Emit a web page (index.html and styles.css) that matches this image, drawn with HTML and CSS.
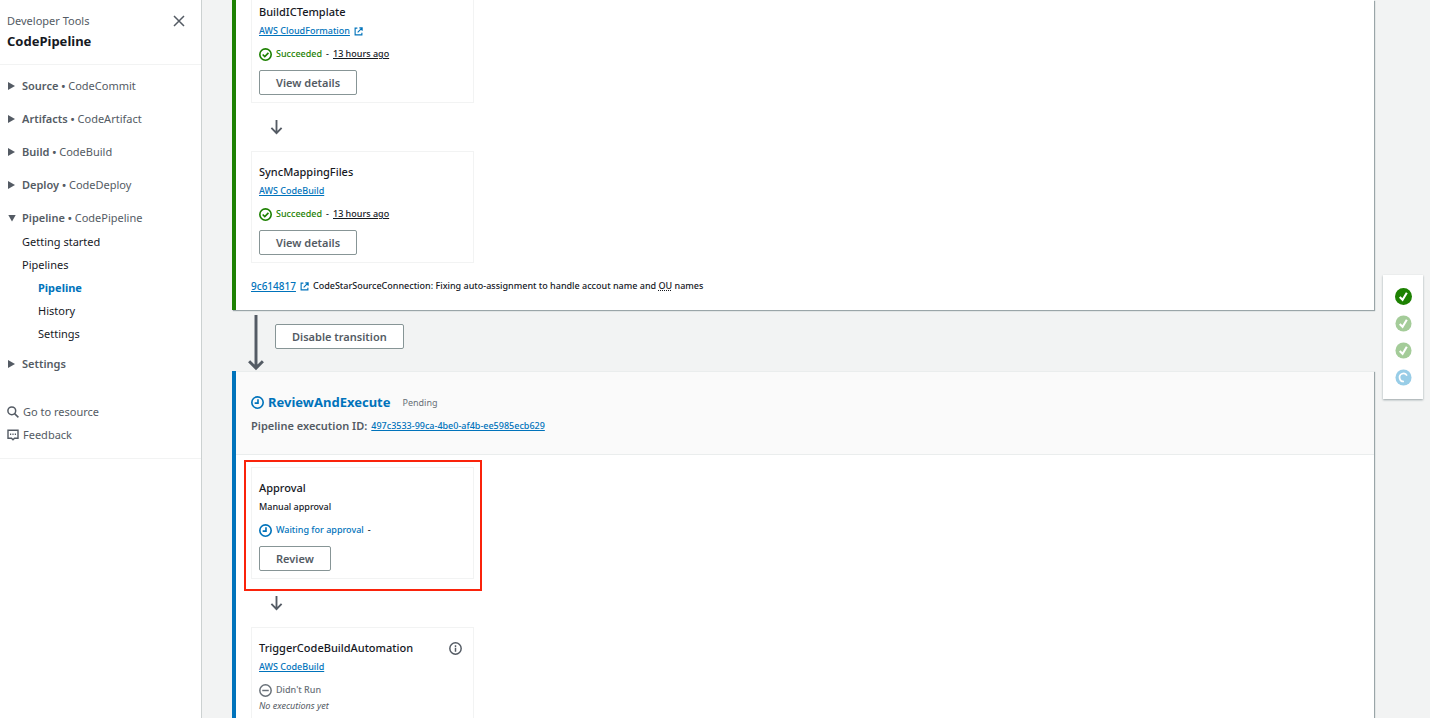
FILE: index.html
```html
<!DOCTYPE html>
<html lang="en">
<head>
<meta charset="utf-8">
<title>CodePipeline</title>
<link rel="stylesheet" href="styles.css">
</head>
<body>
<svg class="sprite" aria-hidden="true">
  <symbol id="i-check" viewBox="0 0 16 16"><g fill="none" stroke="currentColor" stroke-width="2"><circle cx="8" cy="8" r="7"/><path d="M4.500 8l2.600 2.600L11.600 6"/></g></symbol>
  <symbol id="i-clock" viewBox="0 0 16 16"><g fill="none" stroke="currentColor" stroke-width="2"><circle cx="8" cy="8" r="7"/><path d="M8.600 4v4.800H4.500"/></g></symbol>
  <symbol id="i-minus" viewBox="0 0 16 16"><g fill="none" stroke="currentColor" stroke-width="1.800"><circle cx="8" cy="8" r="7"/><path d="M4 8h8"/></g></symbol>
  <symbol id="i-info" viewBox="0 0 16 16"><g fill="none" stroke="currentColor" stroke-width="1.800"><circle cx="8" cy="8" r="7"/><path d="M8 7v5M8 4v2"/></g></symbol>
  <symbol id="i-ext" viewBox="0 0 16 16"><g fill="none" stroke="currentColor" stroke-width="2"><path d="M6 2H2v12h12v-4M9.500 1.500H14.500V6.500M14 2L6.500 9.500"/></g></symbol>
  <symbol id="i-down" viewBox="0 0 14 16"><path d="M7 0v14M1.500 8.500L7 14l5.500-5.500" fill="none" stroke="currentColor" stroke-width="2"/></symbol>
</svg>
<div class="app">
  <nav class="side">
    <header class="side-head">
      <div>
        <div class="side-sub">Developer Tools</div>
        <h1 class="side-title">CodePipeline</h1>
      </div>
      <button class="close" aria-label="Close"><svg viewBox="0 0 12 12"><path d="M1 1l10 10M11 1L1 11" stroke="currentColor" stroke-width="1.500"/></svg></button>
    </header>
    <ul class="groups">
      <li><button class="group"><i class="tri"></i><span><b>Source •</b> CodeCommit</span></button></li>
      <li><button class="group"><i class="tri"></i><span><b>Artifacts •</b> CodeArtifact</span></button></li>
      <li><button class="group"><i class="tri"></i><span><b>Build •</b> CodeBuild</span></button></li>
      <li><button class="group"><i class="tri"></i><span><b>Deploy •</b> CodeDeploy</span></button></li>
      <li>
        <button class="group"><i class="tri tri-open"></i><span><b>Pipeline •</b> CodePipeline</span></button>
        <ul class="links">
          <li><a href="#">Getting started</a></li>
          <li><a href="#">Pipelines</a></li>
          <li class="deep"><a href="#" class="current">Pipeline</a></li>
          <li class="deep"><a href="#">History</a></li>
          <li class="deep"><a href="#">Settings</a></li>
        </ul>
      </li>
      <li><button class="group"><i class="tri"></i><span><b>Settings</b></span></button></li>
    </ul>
    <div class="tools">
      <a href="#" class="tool"><svg viewBox="0 0 12 12" fill="none" stroke="currentColor" stroke-width="1.500"><circle cx="4.800" cy="4.800" r="3.900"/><path d="M7.600 7.600l3.800 3.800"/></svg>Go to resource</a>
      <a href="#" class="tool"><svg viewBox="0 0 12 12" fill="none" stroke="currentColor" stroke-width="1.400"><path d="M1 1.200h10v8H7.500L6 10.700 4.500 9.200H1z"/><path d="M3 5.200h1.200M5.400 5.200h1.200M7.800 5.200H9"/></svg>Feedback</a>
    </div>
  </nav>

  <main class="main">
    <section class="stage stage-done">
      <div class="stage-body stage-body-first">
        <article class="card card-first">
          <h3 class="card-title">BuildICTemplate</h3>
          <a href="#" class="provider">AWS CloudFormation<svg class="ext"><use href="#i-ext"/></svg></a>
          <p class="status"><svg class="ico green"><use href="#i-check"/></svg><span class="green">Succeeded</span><span>-</span><span class="ago">13 hours ago</span></p>
          <button class="btn">View details</button>
        </article>
        <div class="step"><svg><use href="#i-down"/></svg></div>
        <article class="card">
          <h3 class="card-title">SyncMappingFiles</h3>
          <a href="#" class="provider">AWS CodeBuild</a>
          <p class="status"><svg class="ico green"><use href="#i-check"/></svg><span class="green">Succeeded</span><span>-</span><span class="ago">13 hours ago</span></p>
          <button class="btn">View details</button>
        </article>
        <p class="commit"><a href="#" class="hash">9c614817<svg class="ext"><use href="#i-ext"/></svg></a><span>CodeStarSourceConnection: Fixing auto-assignment to handle accout name and <abbr>OU</abbr> names</span></p>
      </div>
    </section>

    <div class="transition">
      <svg class="long" viewBox="0 0 16 58"><path d="M8 1v54M1 48l7 7 7-7" fill="none" stroke="currentColor" stroke-width="3"/></svg>
      <button class="btn">Disable transition</button>
    </div>

    <section class="stage stage-pending">
      <header class="stage-head">
        <div class="stage-name"><svg class="ico"><use href="#i-clock"/></svg><h2>ReviewAndExecute</h2><span class="pending">Pending</span></div>
        <div class="exec"><b>Pipeline execution ID:</b><a href="#">497c3533-99ca-4be0-af4b-ee5985ecb629</a></div>
      </header>
      <div class="stage-body">
        <article class="card marked">
          <h3 class="card-title">Approval</h3>
          <p class="provider-text">Manual approval</p>
          <p class="status"><svg class="ico blue"><use href="#i-clock"/></svg><span class="blue">Waiting for approval</span><span>-</span></p>
          <button class="btn">Review</button>
        </article>
        <div class="step"><svg><use href="#i-down"/></svg></div>
        <article class="card">
          <div class="card-top"><h3 class="card-title">TriggerCodeBuildAutomation</h3><button class="info" aria-label="Info"><svg><use href="#i-info"/></svg></button></div>
          <a href="#" class="provider">AWS CodeBuild</a>
          <p class="status grey"><svg class="ico"><use href="#i-minus"/></svg><span>Didn't Run</span></p>
          <p class="none">No executions yet</p>
        </article>
      </div>
    </section>
  </main>

  <aside class="rail">
    <ul class="map">
      <li><svg viewBox="0 0 18 18"><circle cx="9" cy="9" r="9" fill="#1d8102"/><path d="M5 9.500l3 3L12.500 5" fill="none" stroke="#fff" stroke-width="2.200"/></svg></li>
      <li class="dim"><svg viewBox="0 0 18 18"><circle cx="9" cy="9" r="8.500" fill="#1d8102"/><path d="M5 9.500l3 3L12.500 5" fill="none" stroke="#fff" stroke-width="2.200"/></svg></li>
      <li class="dim"><svg viewBox="0 0 18 18"><circle cx="9" cy="9" r="8.500" fill="#1d8102"/><path d="M5 9.500l3 3L12.500 5" fill="none" stroke="#fff" stroke-width="2.200"/></svg></li>
      <li class="dim"><svg viewBox="0 0 18 18"><circle cx="9" cy="9" r="8.500" fill="#0083c4"/><path d="M12.700 7A4.200 4.200 0 1 0 9.500 13.200" fill="none" stroke="#fff" stroke-width="1.800"/></svg></li>
    </ul>
  </aside>
</div>
</body>
</html>
```
FILE: styles.css
```css
* { box-sizing: border-box; }
body {
  margin: 0;
  height: 100vh;
  overflow: hidden;
  background: #f2f3f3;
  color: #16191f;
  font: 10px/18px "Noto Sans", "Open Sans", sans-serif;
}
h1, h2, h3, p, ul { margin: 0; padding: 0; }
ul { list-style: none; }
svg { display: block; flex: none; }
button { font: inherit; color: inherit; cursor: pointer; }
a { color: #0073bb; }
b { font-weight: 600; }
.sprite { position: absolute; width: 0; height: 0; }
.app { display: flex; height: 100%; }
.green { color: #1d8102; }
.blue { color: #0073bb; }
.grey { color: #687078; }

.side {
  flex: none;
  width: 202px;
  background: #fff;
  border-right: 1px solid #ccd1d1;
  color: #545b64;
  font-size: 11px;
}
.side-head {
  display: flex;
  justify-content: space-between;
  padding: 12px 16px 12px 7px;
  height: 65px;
  border-bottom: 1px solid #f2f3f3;
}
.side-title { font-size: 13px; line-height: 22px; color: #16191f; }
.close { width: 12px; height: 18px; padding: 0; border: 0; background: none; }
.close svg { width: 12px; height: 12px; }
.groups { padding-top: 11px; }
.group {
  display: flex;
  align-items: center;
  width: 100%;
  height: 20px;
  margin-bottom: 13px;
  padding: 0 0 0 8px;
  border: 0;
  background: none;
  text-align: left;
}
.tri {
  width: 14px;
  flex: none;
}
.tri::before {
  content: "";
  display: block;
  width: 7px;
  height: 8px;
  background: #545b64;
  clip-path: polygon(0 0, 100% 50%, 0 100%);
}
.tri-open::before { width: 8px; height: 7px; clip-path: polygon(0 0, 100% 0, 50% 100%); }
.links { margin-top: -11px; padding: 0 0 9px 22px; }
.links li { height: 23px; line-height: 23px; }
.links .deep { padding-left: 16px; }
.links a { color: #16191f; text-decoration: none; }
.links .current { color: #0073bb; font-weight: 700; }
.tools { padding: 13px 0 12px 7px; border-bottom: 1px solid #f2f3f3; }
.tool {
  display: flex;
  align-items: center;
  gap: 4px;
  height: 23px;
  color: #545b64;
  text-decoration: none;
}
.tool svg { width: 12px; height: 12px; }

.main { flex: 1; min-width: 0; padding-left: 30px; }
.stage {
  background: #fff;
  border-left: 4px solid #0073bb;
  box-shadow: 1px 1px 1px #9aa5a8;
}
.stage-done { border-left-color: #1d8102; }
.stage-body { padding: 12px 15px; }
.stage-body-first { padding-top: 0; padding-bottom: 15px; }
.stage-head {
  padding: 18px 15px 16px;
  background: #fafafa;
  border-top: 1px solid #eaeded;
  border-bottom: 1px solid #eaeded;
}
.stage-name { display: flex; align-items: center; height: 24px; color: #0073bb; }
.stage-name .ico { margin-right: 4px; }
.stage-name h2 { font-size: 13px; line-height: 24px; }
.pending { margin: 2px 0 0 12px; font-size: 9px; color: #687078; }
.exec { display: flex; gap: 4px; line-height: 24px; color: #545b64; font-size: 11px; }
.exec a { font-size: 9px; font-weight: 500; }

.card {
  width: 223px;
  padding: 10px 7px 7px;
  border: 1px solid #f2f3f3;
}
.card-first { border-top: 0; padding-top: 2px; }
.card-top { display: flex; justify-content: space-between; padding-right: 4px; }
.card-title { font-size: 11px; line-height: 20px; font-weight: 500; }
.info { padding: 0; border: 0; background: none; color: #545b64; }
.info svg { width: 13px; height: 13px; }
.provider { display: flex; align-items: center; width: fit-content; font-size: 9px; font-weight: 500; }
.provider-text { font-size: 9px; font-weight: 500; }
.ext { width: 9px; height: 9px; margin-left: 4px; }
.ico { width: 13px; height: 13px; }
.status {
  display: flex;
  align-items: center;
  gap: 4px;
  margin-top: 5px;
  font-size: 9px;
  font-weight: 500;
}
.ago { text-decoration: underline; }
.none { font-size: 9px; line-height: 14px; font-style: italic; color: #545b64; }
.btn {
  display: block;
  height: 25px;
  margin-top: 7px;
  padding: 0 16px;
  border: 1px solid #879596;
  border-radius: 2px;
  background: #fff;
  color: #545b64;
  font-size: 11px;
  font-weight: 600;
}
.step { height: 48px; padding: 17px 0 0 19px; color: #545b64; }
.step svg { width: 13px; height: 15px; }
.marked { position: relative; }
.marked::after {
  content: "";
  position: absolute;
  inset: -8px -9px -13px -8px;
  border: 2px solid #fa230b;
  pointer-events: none;
}
.commit { display: flex; align-items: center; margin-top: 14px; font-size: 9px; font-weight: 500; }
.hash { display: flex; align-items: center; margin-right: 4px; font-size: 10px; }
.commit abbr { text-decoration: underline dotted; }
.transition { display: flex; height: 61px; padding: 4px 0 0 16px; color: #545b64; }
.transition .btn { margin: 10px 0 0 11px; }
.long { width: 16px; height: 57px; }

.rail { flex: none; width: 56px; padding: 275px 7px 0 9px; }
.map {
  display: grid;
  justify-items: center;
  gap: 10px;
  padding: 13px 0;
  background: #fff;
  box-shadow: 0 1px 2px #9aa5a8;
}
.map svg { width: 17px; height: 17px; }
.dim { opacity: 0.4; }
```
